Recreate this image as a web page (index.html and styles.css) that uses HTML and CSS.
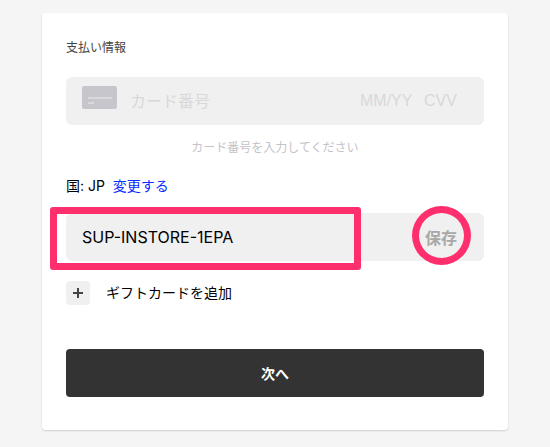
FILE: index.html
```html
<!DOCTYPE html>
<html lang="ja">
<head>
    <meta charset="UTF-8">
    <meta name="viewport" content="width=device-width, initial-scale=1.0">
    <title>支払い情報</title>
    <link rel="stylesheet" href="styles.css">
</head>
<body>
    <form class="card">
        <h1 class="title">支払い情報</h1>

        <div class="field">
            <svg class="card-icon" viewBox="0 0 35 23" aria-hidden="true">
                <rect width="35" height="23" rx="2" fill="#c7c6cc"/>
                <path d="M6 12h24M6 17h6" stroke="#d9d8dd" stroke-width="2"/>
            </svg>
            <input class="number" type="text" placeholder="カード番号" aria-label="カード番号">
            <input class="expiry" type="text" placeholder="MM/YY" aria-label="MM/YY">
            <input class="cvv" type="text" placeholder="CVV" aria-label="CVV">
        </div>
        <p class="hint">カード番号を入力してください</p>

        <p class="country">国: JP <a class="change" href="#">変更する</a></p>

        <div class="field promo">
            <input class="code" type="text" value="SUP-INSTORE-1EPA" aria-label="プロモーションコード">
            <button class="save" type="button">保存</button>
            <span class="mark-box"></span>
        </div>

        <div class="gift">
            <button class="plus" type="button" id="addGift">
                <svg class="plus-icon" viewBox="0 0 10 10" aria-hidden="true">
                    <path d="M5 0v10M0 5h10" stroke="#444" stroke-width="2"/>
                </svg>
            </button>
            <label for="addGift">ギフトカードを追加</label>
        </div>

        <button class="next" type="submit">次へ</button>
    </form>
</body>
</html>
```

FILE: styles.css
```css
* {
    box-sizing: border-box;
}
body {
    margin: 0;
    padding: 13px 42px 17px;
    background: #f5f5f5;
    color: #000;
    font-family: Inter, "Noto Sans CJK JP", sans-serif;
    font-size: 14px;
    line-height: 20px;
}
input, button {
    padding: 0;
    border: 0;
    background: none;
    font-family: inherit;
    font-size: 16px;
}
button {
    cursor: pointer;
}
.card {
    padding: 25px 24px 33px;
    border-radius: 4px;
    background: #fff;
    box-shadow: 0 1px 2px rgba(0, 0, 0, 0.15);
}
.title {
    margin: 0 0 19px;
    color: #444;
    font-size: 12px;
    font-weight: 400;
}
.field {
    display: flex;
    align-items: center;
    height: 48px;
    padding: 0 16px;
    border-radius: 6px;
    background: #f0f0f0;
}
.field input {
    min-width: 0;
    height: 24px;
}
.field input::placeholder {
    color: #d8d8da;
    opacity: 1;
}
.card-icon {
    flex: none;
    width: 35px;
    height: 23px;
    margin: 0 13px 7px 0;
}
.number {
    flex: 1;
}
.expiry, .cvv {
    flex: none;
    font-family: "Liberation Sans", Arial, sans-serif;
}
.expiry {
    width: 64px;
}
.cvv {
    width: 44px;
}
.hint {
    margin: 13px 0 18px;
    color: #c4c4c8;
    font-size: 12px;
    text-align: center;
}
.country {
    margin: 0 0 17px;
}
.change {
    margin-left: 4px;
    color: #0a2cff;
    text-decoration: none;
}
.promo {
    position: relative;
    padding-right: 27px;
}
.code {
    flex: 1;
}
.save {
    position: relative;
    color: #a8a8a8;
    font-weight: 700;
}
/* highlights around the code and the save button */
.mark-box {
    position: absolute;
    inset: -6px 123px -9px -16px;
    border: 7px solid #ff2f6e;
    border-radius: 3px;
    pointer-events: none;
}
.save::after {
    content: "";
    position: absolute;
    inset: -19px -14px -16px -13px;
    border: 7px solid #ff2f6e;
    border-radius: 50%;
}
.gift {
    display: flex;
    align-items: center;
    gap: 16px;
    margin: 20px 0 44px;
}
.plus {
    display: grid;
    place-items: center;
    width: 24px;
    height: 24px;
    border-radius: 4px;
    background: #f0f0f0;
}
.plus-icon {
    width: 10px;
    height: 10px;
}
.next {
    display: block;
    width: 100%;
    height: 48px;
    border-radius: 4px;
    background: #333;
    color: #fff;
    font-size: 14px;
    font-weight: 700;
}
```
